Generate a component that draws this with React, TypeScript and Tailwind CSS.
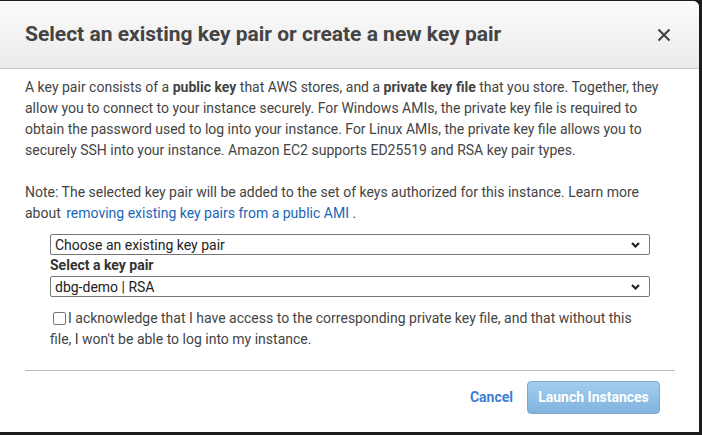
import React from "react";

function Chevron() {
  return (
    <svg className="w-[9px] h-[6px] shrink-0" viewBox="0 0 9 6" fill="none" stroke="#222" strokeWidth={2.2}>
      <path d="M1 1l3.5 3.5L8 1" />
    </svg>
  );
}

function FakeSelect({ value }: { value: string }) {
  return (
    <div className="flex items-center justify-between h-[21px] border border-[#767676] rounded-[2px] bg-white pl-[4px] pr-[9px] text-[14px] leading-none text-[#222]">
      <span>{value}</span>
      <Chevron />
    </div>
  );
}

export default function App() {
  return (
    <div className="w-[702px] h-[435px] bg-[#1c1c1c] overflow-hidden pt-px font-['Roboto',sans-serif]">
      <div className="-ml-[10px] w-[709px] h-[431px] bg-white rounded-tr-[6px] overflow-hidden flex flex-col">
        <div className="h-[68px] shrink-0 flex items-center justify-between pl-[35px] pr-[28px] border-b border-[#cccccc] bg-gradient-to-b from-[#fbfbfb] to-[#ebebeb]">
          <h1 className="text-[21px] font-bold text-[#444] mt-[1px]">
            Select an existing key pair or create a new key pair
          </h1>
          <svg className="w-[14px] h-[14px]" viewBox="0 0 14 14" stroke="#444" strokeWidth={2.2} fill="none">
            <path d="M1.5 1.5l11 11M12.5 1.5l-11 11" />
          </svg>
        </div>

        <div className="pl-[35px] w-[685px] pt-[8px] text-[14px] leading-[21px] text-[#444]">
          <p className="mb-[21px]">
            A key pair consists of a <b>public key</b> that AWS stores, and a <b>private key file</b> that you
            store. Together, they allow you to connect to your instance securely. For Windows AMIs, the private
            key file is required to obtain the password used to log into your instance. For Linux AMIs, the
            private key file allows you to securely SSH into your instance. Amazon EC2 supports ED25519 and RSA
            key pair types.
          </p>
          <p>
            Note: The selected key pair will be added to the set of keys authorized for this instance. Learn more
            about <a className="text-[#1a66b8] ml-[2px]">removing existing key pairs from a public AMI</a> .
          </p>

          <div className="px-[25px] mt-[10px]">
            <FakeSelect value="Choose an existing key pair" />
            <div className="font-bold text-[#333]">Select a key pair</div>
            <FakeSelect value="dbg-demo | RSA" />
            <label className="block mt-[11px]">
              <span className="inline-block align-[-2px] w-[13px] h-[13px] border border-[#767676] rounded-[2px] ml-[3px] mr-[2px] bg-white" />
              I acknowledge that I have access to the corresponding private key file, and that without this file,
              I won't be able to log into my instance.
            </label>
          </div>

          <div className="mt-[20px] border-t border-[#bbbbbb]" />

          <div className="flex items-center justify-end gap-[14px] pr-[15px] pt-[10px]">
            <button className="text-[14px] font-bold text-[#3d7fd6]">Cancel</button>
            <button className="w-[133px] h-[33px] rounded-[4px] border border-[#7eaad2] bg-gradient-to-b from-[#a2cdf0] to-[#80b3dd] text-white font-bold text-[14px]">
              Launch Instances
            </button>
          </div>
        </div>
      </div>
    </div>
  );
}
